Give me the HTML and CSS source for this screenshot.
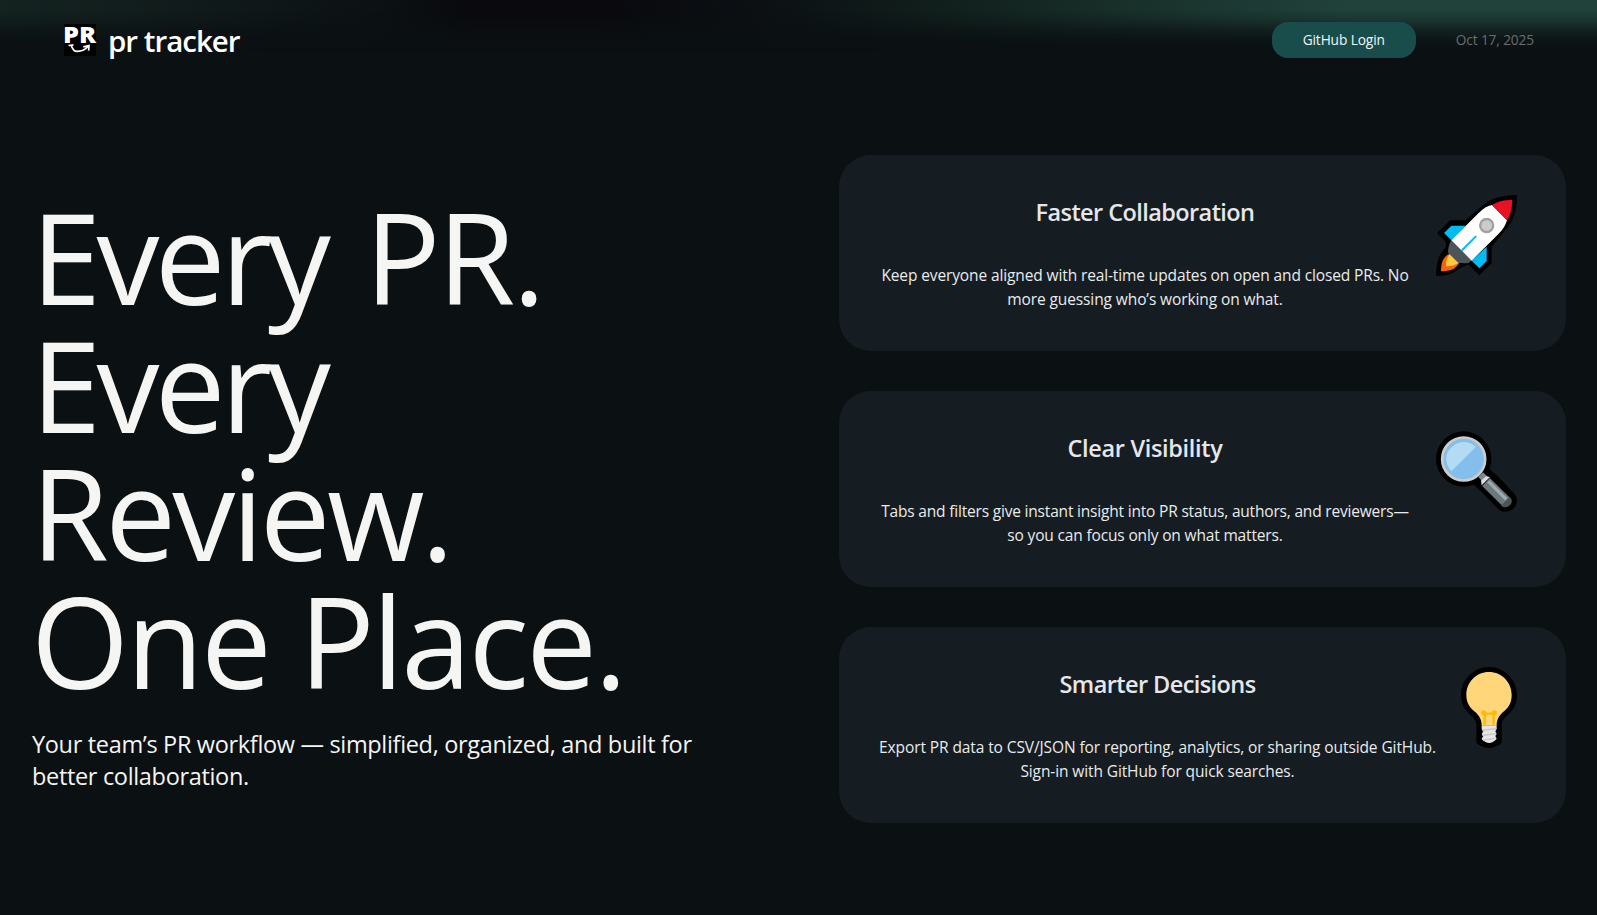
FILE: index.html
```html
<!DOCTYPE html>
<html lang="en">
<head>
<meta charset="utf-8">
<title>pr tracker</title>
<link rel="stylesheet" href="styles.css">
</head>
<body>
<header class="header">
  <div class="brand">
    <svg class="logo" viewBox="0 0 32 32" width="32" height="32">
      <rect width="32" height="32" fill="#000"/>
      <text class="logo-text" x="-0.9" y="18.6" textLength="33" lengthAdjust="spacingAndGlyphs">PR</text>
      <path d="M4.500 21.500L9.500 20.800M7.200 21.200C8.500 25.800 11.500 28 15 27.200C18 27 21.500 25.500 23.800 22.500M19.300 22.800L25 21.600L24.600 26.600" fill="none" stroke="#fff" stroke-width="1.7"/>
    </svg>
    <span class="brand-name">pr tracker</span>
  </div>
  <div class="actions">
    <button class="login">GitHub Login</button>
    <span class="date">Oct 17, 2025</span>
  </div>
</header>
<main class="main">
  <section class="hero">
    <h1 class="headline">
      <span class="line h-a"><span class="h-b">Every</span> PR.</span>
      <span class="line h-b">Every</span>
      <span class="line h-c">Review.</span>
      <span class="line h-d">One Place.</span>
    </h1>
    <p class="tagline"><span>Your team’s PR workflow — simplified, organized, and built for</span> <span>better collaboration.</span></p>
  </section>
  <section class="cards">
    <article class="card">
      <div class="copy">
        <h2 class="title">Faster Collaboration</h2>
        <p class="text"><span class="t-keep">Keep everyone aligned with real-time updates on open and closed PRs. No</span> <span class="t-more">more guessing who’s working on what.</span></p>
      </div>
      <svg class="icon" viewBox="48 45 243 243" width="81" height="81">
        <path d="M291 45C240 46 212 57 190 75L136 121H91L51 159L78 187L77 203C56 221 49 249 48 288C82 288 101 281 120 265L145 253L178 286L215 249V200L257 149C280 125 291 91 291 45Z" fill="#000"/>
        <path d="M72 159L94 137H137L94 181ZM200 200V243L178 265L155 242Z" fill="#00bcf2"/>
        <path d="M92 219C70 229 63 246 63 274C91 274 108 268 118 247Z" fill="#f7630c"/>
        <path d="M93 219C82 228 77 242 78 259C94 259 108 256 117 246Z" fill="#ffc83d"/>
        <path d="M94 181L155 242L145 249C133 250 121 250 113 247L84 218C84 205 87 192 94 181Z" fill="#4a5459"/>
        <path d="M94 181L176 99C190 85 202 78 216 75L261 121C257 135 249 149 236 161L155 242Z" fill="#fff"/>
        <path d="M216 75C234 64 252 60 277 60C276 85 272 105 261 121Z" fill="#e81224"/>
        <circle cx="200" cy="136.500" r="19.500" fill="#ccc" stroke="#a0a0a0" stroke-width="7"/>
        <path d="M127 210L167 170" stroke="#00bcf2" stroke-width="6" stroke-linecap="round"/>
      </svg>
    </article>
    <article class="card">
      <div class="copy">
        <h2 class="title t-clear">Clear Visibility</h2>
        <p class="text"><span class="t-tabs">Tabs and filters give instant insight into PR status, authors, and reviewers—</span> <span class="t-so">so you can focus only on what matters.</span></p>
      </div>
      <svg class="icon" viewBox="49 33 243 243" width="81" height="81">
        <path d="M132 117L200 184M205 187L258 242" stroke="#000" stroke-width="67" stroke-linecap="round" fill="none"/>
        <circle cx="132" cy="117" r="83" fill="#000"/>
        <path d="M176 171L190 157L205 171L190 187Z" fill="#788a8e"/>
        <path d="M199 186L260 246" stroke="#6b797e" stroke-width="33"/>
        <path d="M244 257L270 230C277 237 279 246 272 254C264 263 253 264 244 257Z" fill="#4a5459"/>
        <path d="M206 184L260 238" stroke="#9aaaae" stroke-width="10"/>
        <path d="M184 182L199 169L211 171L186 196Z" fill="#dfdcdf"/>
        <circle cx="132" cy="117" r="64.500" fill="#83beec" stroke="#ccc" stroke-width="8"/>
        <path d="M95 154C75 131 74 101 96 81C117 60 149 62 169 80Z" fill="#b3dbf2"/>
      </svg>
    </article>
    <article class="card">
      <div class="copy">
        <h2 class="title">Smarter Decisions</h2>
        <p class="text"><span class="t-export">Export PR data to CSV/JSON for reporting, analytics, or sharing outside GitHub.</span> <span class="t-sign">Sign-in with GitHub for quick searches.</span></p>
      </div>
      <svg class="icon" viewBox="124 36 168 243" width="56" height="81">
        <path d="M208 36C162 36 124 74 124 120C124 146 135 164 150 178C164 190 170 199 170 211V257C170 267 180 271 187 273C193 281 223 281 229 273C238 271 246 267 246 257V211C246 199 252 190 266 178C281 164 292 146 292 120C292 74 254 36 208 36Z" fill="#000"/>
        <path d="M208 51C169 51 140 82 140 120C140 142 149 156 164 169C179 182 186 194 186 211H231C231 194 238 182 253 169C268 156 276 142 276 120C276 82 247 51 208 51Z" fill="#ffd679"/>
        <path d="M195 211V176M222 211V176M192 176H225" stroke="#ffb900" stroke-width="7"/>
        <circle cx="192" cy="173" r="7.500" fill="#ffb900"/><circle cx="224" cy="173" r="7.500" fill="#ffb900"/>
        <path d="M186 211H231V222L227 229L231 237L227 243L231 251C229 256 222 258 218 262C213 265 204 265 199 262C194 258 188 257 186 251L191 243L186 237L191 229L186 222Z" fill="#e6e6e6"/>
        <path d="M188 226L229 221M188 241L229 236M190 255L228 250" stroke="#ccc" stroke-width="5"/>
      </svg>
    </article>
  </section>
</main>
</body>
</html>
```
FILE: styles.css
```css
* { box-sizing: border-box; margin: 0; padding: 0; }

body {
  min-height: 915px;
  background: #0b1012;
  color: #f5f5f4;
  font-family: "Segoe UI", "Open Sans", sans-serif;
  overflow: hidden;
}

.header {
  position: relative;
  display: flex;
  justify-content: space-between;
  height: 90px;
  padding: 0 63px 0 64px;
}

/* Soft glow along the top edge */
.header::before {
  content: "";
  position: absolute;
  inset: 0;
  background: linear-gradient(90deg, #132320 0, #111b1b 180px, #0c1113 380px, #09090e 470px, #09090e 600px, #0c1013 760px, #11201d 950px, #1b352f 1190px, #20423b 1350px, #20423b 100%);
  -webkit-mask-image: linear-gradient(#000 10px, rgba(0,0,0,.75) 20px, rgba(0,0,0,.36) 30px, rgba(0,0,0,.1) 40px, transparent 52px);
  mask-image: linear-gradient(#000 10px, rgba(0,0,0,.75) 20px, rgba(0,0,0,.36) 30px, rgba(0,0,0,.1) 40px, transparent 52px);
}

.brand, .actions { position: relative; display: flex; align-items: flex-start; }
.brand { gap: 12px; padding-top: 24px; }
.logo { display: block; overflow: visible; }
.logo-text { font: 800 22.4px "Open Sans", sans-serif; fill: #fff; }
.brand-name {
  padding-top: 1px;
  font-size: 29.5px;
  font-weight: 600;
  line-height: 32px;
  letter-spacing: -1px;
  color: #fff;
}

.actions { gap: 40px; padding-top: 22px; }
.login {
  width: 144px;
  height: 36px;
  border: 0;
  border-radius: 16px;
  background: #194d4c;
  color: #f5f5f4;
  font: 500 13.7px/36px "Segoe UI", "Open Sans", sans-serif;
  letter-spacing: -0.1px;
}
.date { font-size: 13.7px; line-height: 36px; letter-spacing: -0.12px; color: #6a6d6e; }

.main {
  display: grid;
  grid-template-columns: 807px 727px;
  padding: 65px 0 0 32px;
}

.hero { padding-top: 37px; }
.headline {
  margin-left: -1px;
  font-size: 126px;
  font-weight: 400;
  line-height: 128px;
}
.headline .line { display: block; white-space: nowrap; }
.h-a { letter-spacing: -2.9px; word-spacing: 8.5px; }
.h-b { letter-spacing: -4.6px; }
.h-c { letter-spacing: -3.6px; }
.h-d { letter-spacing: -2.7px; }
.tagline {
  margin-top: 24px;
  font-size: 23.5px;
  line-height: 32px;
  letter-spacing: -0.33px;
}
.tagline span, .text span { display: block; white-space: nowrap; }

.cards { display: flex; flex-direction: column; gap: 40px; }
.card {
  display: flex;
  gap: 25px;
  height: 196px;
  padding: 40px 49px 0 40px;
  border-radius: 32px;
  background: #161d22;
}
.copy { flex: 1; min-width: 0; text-align: center; }
.title {
  margin-top: 1px;
  font-size: 23.5px;
  font-weight: 600;
  line-height: 32px;
  letter-spacing: -0.58px;
  color: #e5e7eb;
}
.t-clear { letter-spacing: -0.32px; }
.text { margin-top: 35px; font-size: 15.5px; line-height: 24px; color: #e9ebec; }
.t-keep { letter-spacing: -0.12px; }
.t-more { letter-spacing: -0.1px; }
.t-tabs { letter-spacing: -0.19px; }
.t-so { letter-spacing: -0.16px; }
.t-export { letter-spacing: -0.1px; }
.t-sign { letter-spacing: -0.11px; }
.icon { flex: none; display: block; }
```
